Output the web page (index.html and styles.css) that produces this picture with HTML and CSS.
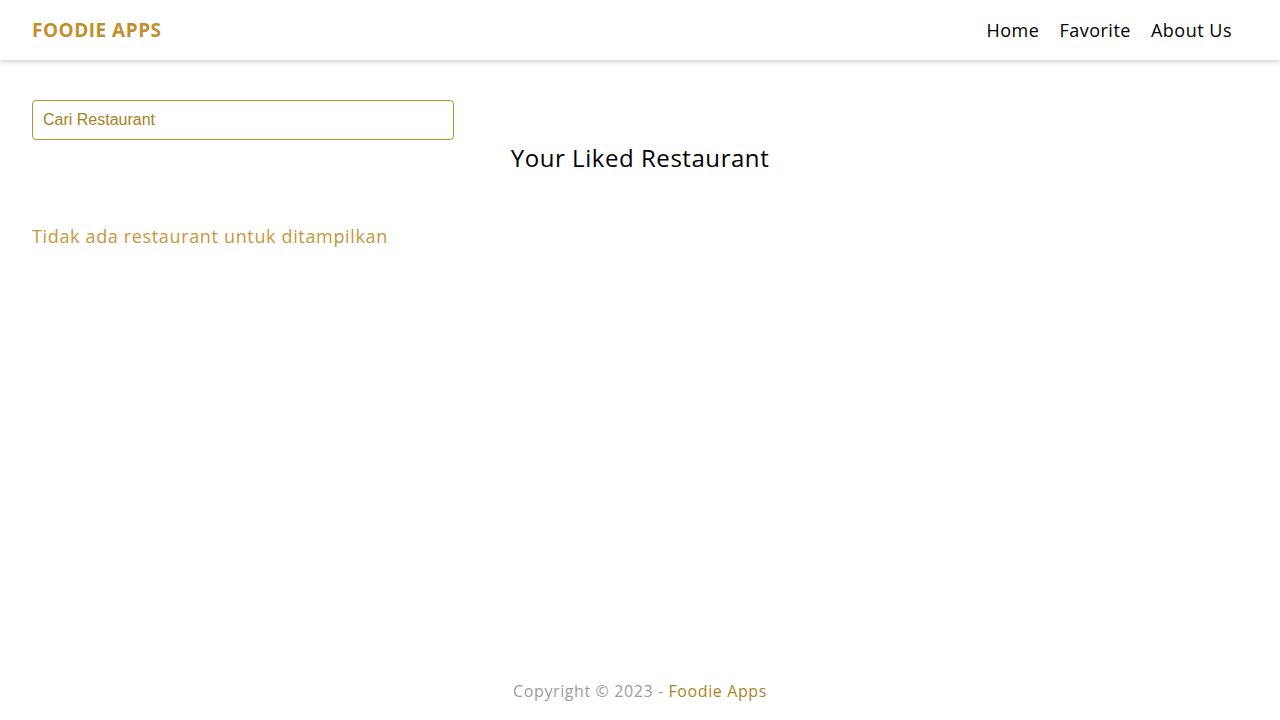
FILE: index.html
```html
<!DOCTYPE html>
<html lang="id">
<head>
<meta charset="utf-8">
<title>Foodie Apps</title>
<link rel="stylesheet" href="styles.css">
</head>
<body>
<header class="app-bar">
  <a class="brand" href="#">FOODIE APPS</a>
  <nav class="nav">
    <a href="#">Home</a>
    <a href="#">Favorite</a>
    <a href="#">About Us</a>
  </nav>
</header>
<main class="content">
  <div class="search">
    <input type="text" placeholder="Cari Restaurant">
  </div>
  <h2 class="title">Your Liked Restaurant</h2>
  <p class="empty">Tidak ada restaurant untuk ditampilkan</p>
</main>
<footer class="footer">
  <span class="copy">Copyright © 2023 - </span><span class="name">Foodie Apps</span>
</footer>
</body>
</html>
```
FILE: styles.css
```css
* { box-sizing: border-box; }
html, body { margin: 0; padding: 0; height: 100%; }
body {
  font-family: "Open Sans", "Noto Sans", sans-serif;
  background: #fff;
  color: #000;
  display: flex;
  flex-direction: column;
  min-height: 720px;
}
.app-bar {
  height: 60px;
  display: flex;
  align-items: center;
  justify-content: space-between;
  padding: 0 48px 0 32px;
  background: #fff;
  box-shadow: 0 2px 4px rgba(0,0,0,0.18);
}
.brand {
  color: #c28f2c;
  font-weight: 700;
  font-size: 19px;
  text-decoration: none;
  letter-spacing: 0.5px;
}
.nav { display: flex; gap: 20px; }
.nav a {
  color: #000;
  text-decoration: none;
  font-size: 18px;
  letter-spacing: 0.5px;
}
.content {
  flex: 1;
  padding: 40px 32px 0;
}
.search input {
  width: 422px;
  height: 40px;
  border: 1px solid #c28f2c;
  border-radius: 4px;
  padding: 0 10px;
  font-family: "Liberation Sans", Arial, sans-serif;
  font-size: 16px;
  outline: none;
}
.search input::placeholder { color: #a97f24; opacity: 1; }
.title {
  margin: 4px 0 0;
  text-align: center;
  font-weight: 400;
  font-size: 24px;
  line-height: 28px;
  letter-spacing: 0.55px;
}
.empty {
  margin: 52px 0 0;
  color: #c8973b;
  font-size: 18px;
  letter-spacing: 0.65px;
}
.footer {
  text-align: center;
  padding: 0 0 18px;
  font-size: 16px;
  line-height: 22px;
  letter-spacing: 0.6px;
}
.copy { color: #9c9c9c; }
.name { color: #ac841f; }
```
